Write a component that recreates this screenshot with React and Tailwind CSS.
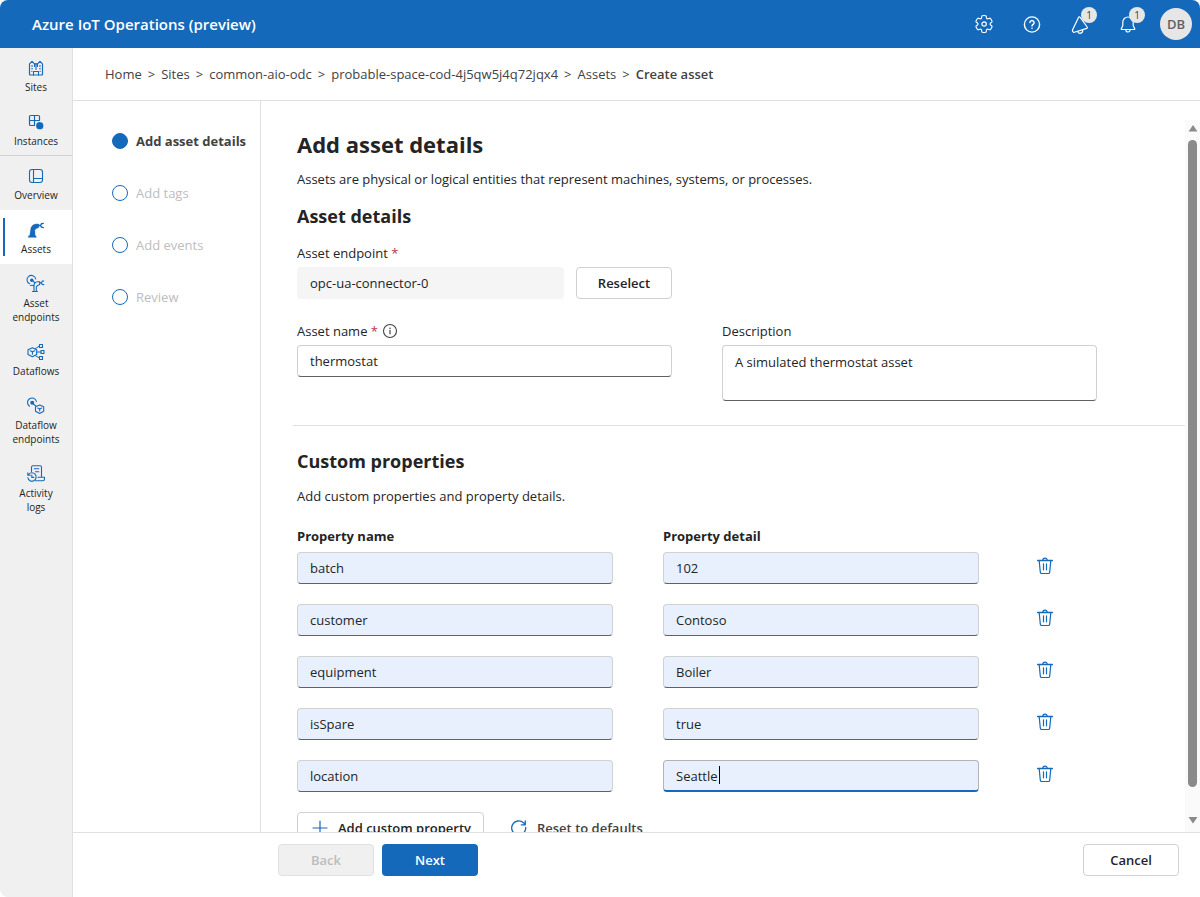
import React from "react";

const BLUE = "#1469bb";

function Icon({ size = 20, color = BLUE, children }) {
  return (
    <svg
      width={size}
      height={size}
      viewBox={`0 0 ${size} ${size}`}
      fill="none"
      stroke={color}
      strokeLinecap="round"
      strokeLinejoin="round"
      aria-hidden="true"
      className="shrink-0"
    >
      {children}
    </svg>
  );
}

const GearIcon = () => (
  <Icon color="#fff">
    <path
      strokeWidth="1.1"
      d="M1.91 7.38A8.5 8.5 0 0 1 3.7 4.3a.5.5 0 0 1 .54-.13l1.92.68a1 1 0 0 0 1.32-.76l.36-2a.5.5 0 0 1 .4-.4 8.53 8.53 0 0 1 3.55 0c.2.04.35.2.38.4l.37 2a1 1 0 0 0 1.32.76l1.92-.68a.5.5 0 0 1 .54.13 8.5 8.5 0 0 1 1.78 3.08c.06.2 0 .4-.15.54l-1.56 1.32a1 1 0 0 0 0 1.52l1.56 1.32a.5.5 0 0 1 .15.54 8.5 8.5 0 0 1-1.78 3.08.5.5 0 0 1-.54.13l-1.92-.68a1 1 0 0 0-1.32.76l-.37 2a.5.5 0 0 1-.38.4 8.53 8.53 0 0 1-3.56 0 .5.5 0 0 1-.39-.4l-.36-2a1 1 0 0 0-1.32-.76l-1.92.68a.5.5 0 0 1-.54-.13 8.5 8.5 0 0 1-1.78-3.08.5.5 0 0 1 .15-.54l1.56-1.32a1 1 0 0 0 0-1.52L2.06 7.92a.5.5 0 0 1-.15-.54Z"
    />
    <circle cx="10.1" cy="10" r="2.2" strokeWidth="1.2" />
  </Icon>
);

const HelpIcon = () => (
  <Icon color="#fff">
    <circle cx="10" cy="10.5" r="7.6" strokeWidth="1.4" />
    <path strokeWidth="1.4" d="M7.9 8.6a2.1 2.1 0 1 1 3.2 1.8c-.7.5-1.1.9-1.1 1.7" />
    <circle cx="10" cy="14.2" r=".8" fill="#fff" stroke="none" />
  </Icon>
);

const MegaphoneIcon = () => (
  <Icon color="#fff">
    <path strokeWidth="1.2" d="M10 3.2 17.2 13a.9.9 0 0 1-.4 1.4L4.4 18.3a1.2 1.2 0 0 1-1.3-.4l-.4-.6a1.400 1.400 0 0 1-.2-1.200L8.500 3.500a.9.9 0 0 1 1.500-.3Z" />
    <path strokeWidth="1.2" d="M7.600 17.400a2.600 2.600 0 0 0 5-1.500" />
  </Icon>
);

const BellIcon = () => (
  <Icon color="#fff">
    <path strokeWidth="1.2" d="M10 3a5.200 5.200 0 0 0-5.200 5.200v3.300l-1.500 3.300a.5.5 0 0 0 .5.7h12.400a.5.5 0 0 0 .5-.7l-1.500-3.300V8.200A5.200 5.200 0 0 0 10 3Z" />
    <path strokeWidth="1.200" d="M7.800 15.800a2.200 2.200 0 0 0 4.400 0" />
  </Icon>
);

const SitesIcon = () => (
  <Icon>
    <path strokeWidth="1.200" d="M3.500 16.300V5.800L6 3.300l2.500 2.500h3L14 3.300l2.500 2.500v10.500a.7.7 0 0 1-.7.700H4.200a.7.7 0 0 1-.7-.7Z" />
    <path strokeWidth="1.100" d="M8.500 5.800v2.700M11.500 5.800v2.700M10 6v5.500M7.500 17v-3.500h5V17" />
    <path strokeWidth="1.300" strokeLinecap="butt" d="M5.400 8h1.300M5.400 10.700h1.300M13.300 8h1.300M13.300 10.700h1.300M5.400 13.400h1M13.600 13.400h1" />
  </Icon>
);

const InstancesIcon = () => (
  <Icon>
    <path strokeWidth="1.2" d="M8 13.500H4.600a1.100 1.100 0 0 1-1.100-1.100V4.600a1.100 1.100 0 0 1 1.100-1.100h7.800a1.100 1.100 0 0 1 1.100 1.100V8.500H3.500M8.500 3.500v10" />
    <rect x="10.500" y="10.500" width="6.500" height="6.500" rx="2.500" fill={BLUE} strokeWidth=".6" />
  </Icon>
);

const OverviewIcon = () => (
  <Icon>
    <rect x="3.500" y="3.500" width="13" height="13" rx="2.500" strokeWidth="1.100" />
    <path strokeWidth="1.100" d="M7.500 3.500v13M7.500 12.500h9" />
  </Icon>
);

const AssetsIcon = () => (
  <Icon>
    <path
      fill={BLUE}
      strokeWidth=".4"
      d="M2.500 17.200v-1.400h1.300L4.600 9.800C4.800 6.400 7 4.300 10 4h2.800v3.600l-3 1.200-1 1.500.3 5.500h1v1.400Z"
    />
    <path strokeWidth="1.400" d="M12.800 5.500h1.700l1-1.800 1.800-.3M14.500 5.600l1 1.500 1.800.5" />
  </Icon>
);

const AssetEndpointsIcon = () => (
  <Icon>
    <path strokeWidth="1.100" d="M3.500 9.800A4.400 4.400 0 1 1 9.700 5" />
    <circle cx="5.800" cy="6.300" r="1.800" fill={BLUE} stroke="none" />
    <path strokeWidth="1.100" d="M7.300 7.400 9 9M6.500 17.500h5M8 17.300V12c0-2.600 1.200-4 3.700-4.200h2v2.700l-2 .9-1.400 1.400v4.500M8 12c-.8-.8-2-1-3.500-.5" />
    <path strokeWidth="1.200" d="M13.800 8.800h1.500l1-1.600 1.400-.2M15.300 9l1 1.300 1.400.4" />
  </Icon>
);

const DataflowsIcon = () => (
  <Icon>
    <path strokeWidth="1.100" d="m6.400 5.800 4.300 2v4.700l-4.300 2.200L2 12.500V7.800l4.400-2ZM4.300 8.800l2.100 1 2.300-1M6.400 9.800v2.400" />
    <rect x="13.500" y="2.500" width="3" height="3" strokeWidth="1.100" />
    <rect x="15" y="8.500" width="3" height="3" strokeWidth="1.100" />
    <rect x="13.500" y="14.500" width="3" height="3" strokeWidth="1.100" />
    <path strokeWidth="1" d="M9.500 6.500 13.500 4M10.700 10H15M9.500 13.700l4 2.300" />
  </Icon>
);

const DataflowEndpointsIcon = () => (
  <Icon>
    <path strokeWidth="1.100" d="M3.500 10.200A4.500 4.500 0 1 1 10.400 5.500" />
    <circle cx="6.200" cy="6.700" r="2" fill={BLUE} stroke="none" />
    <path strokeWidth="1.100" d="m7.500 8 2.700 2.300M13.700 9l4 1.700v4.600l-4 2.200-4.200-2.200v-4.600l4.200-1.700ZM11.800 12l1.900.9 2-.9M13.700 12.900v2" />
  </Icon>
);

const ActivityIcon = () => (
  <Icon>
    <path strokeWidth="1.100" d="M5.500 7.500V3.300c0-.9.600-1.500 1.400-1.500h7.300c.8 0 1.300.6 1.300 1.400v9.800M9.500 16.800h7.200c1.200 0 1.800-.7 1.800-1.800v-1.800h-6.500" />
    <path strokeWidth="1.100" d="M8.300 4.800h4.500M9.500 7.700h3.300" />
    <path strokeWidth="1.100" d="M2.400 10.700a4.200 4.200 0 1 1-.6 3M1.800 8.800v2.500h2.400M5.800 11v2.400h2" />
  </Icon>
);

const TrashIcon = () => (
  <Icon>
    <path strokeWidth="1.300" d="M2.600 4.500h14.800" />
    <path strokeWidth="1.200" d="M7.800 4.300a2.200 2.200 0 0 1 4.400 0M4.200 4.700l1.100 11.400c.1.900.7 1.400 1.500 1.400h6.400c.8 0 1.400-.5 1.500-1.400l1.100-11.400M8.500 7.800v6M11.500 7.800v6" />
  </Icon>
);

const InfoIcon = () => (
  <Icon size={16} color="#424242">
    <circle cx="8" cy="8" r="6.500" strokeWidth="1.100" />
    <path strokeWidth="1.200" d="M8 7.400v3.400" />
    <circle cx="8" cy="5.300" r=".8" fill="#424242" stroke="none" />
  </Icon>
);

const PlusIcon = () => (
  <Icon>
    <path strokeWidth="1.200" d="M10 3v14M3 10h14" />
  </Icon>
);

const ResetIcon = () => (
  <Icon>
    <path strokeWidth="1.300" d="M16.700 9.500a7 7 0 1 1-2.200-4.700l1.800 1.700M16.300 2.800v4h-4" />
  </Icon>
);

const NAV = [
  { label: "Sites", Glyph: SitesIcon },
  { label: "Instances", Glyph: InstancesIcon, divider: true },
  { label: "Overview", Glyph: OverviewIcon },
  { label: "Assets", Glyph: AssetsIcon, active: true },
  { label: "Asset endpoints", Glyph: AssetEndpointsIcon },
  { label: "Dataflows", Glyph: DataflowsIcon },
  { label: "Dataflow endpoints", Glyph: DataflowEndpointsIcon },
  { label: "Activity logs", Glyph: ActivityIcon },
];

const CRUMBS = ["Home", "Sites", "common-aio-odc", "probable-space-cod-4j5qw5j4q72jqx4", "Assets"];
const STEPS = ["Add asset details", "Add tags", "Add events", "Review"];
const PROPERTIES = [
  ["batch", "102"],
  ["customer", "Contoso"],
  ["equipment", "Boiler"],
  ["isSpare", "true"],
  ["location", "Seattle"],
];

const FIELD = "w-full min-w-0 rounded border px-3 text-[#242424] outline-none";
const RESTING = "border-[#d1d1d1] border-b-[#616161]";
const FOCUSED = "border-[#b3b3b3] border-b-2 border-b-[#1469bb]";
const OUTLINE_BUTTON =
  "h-8 shrink-0 rounded border border-[#d1d1d1] bg-white font-semibold text-[#242424]";

function HeaderButton({ label, badge, children }) {
  return (
    <button aria-label={label} className="relative flex h-12 w-12 items-center justify-center">
      {children}
      {badge && (
        <span className="absolute top-[7px] right-[7px] flex size-4 items-center justify-center rounded-full bg-[#e6e6e6] text-[10px] text-[#424242]">
          {badge}
        </span>
      )}
    </button>
  );
}

function Header() {
  return (
    <header className="flex h-12 shrink-0 items-center justify-between bg-[#1469bb] pr-2 pl-8 text-white">
      <span className="text-[15px] font-semibold">Azure IoT Operations (preview)</span>
      <div className="flex items-center">
        <HeaderButton label="Settings"><GearIcon /></HeaderButton>
        <HeaderButton label="Help"><HelpIcon /></HeaderButton>
        <HeaderButton label="Announcements" badge="1"><MegaphoneIcon /></HeaderButton>
        <HeaderButton label="Notifications" badge="1"><BellIcon /></HeaderButton>
        <button className="ml-2 size-8 rounded-full bg-[#e6e6e6] text-[13px] font-semibold text-[#616161]">DB</button>
      </div>
    </header>
  );
}

function Sidebar() {
  return (
    <nav className="w-[73px] shrink-0 border-r border-[#e0e0e0] bg-[#f0f0f0]">
      {NAV.map(({ label, Glyph, active, divider }) => (
        <a
          key={label}
          href="#"
          className={`relative flex flex-col items-center gap-0.5 px-3 pt-2.5 text-center text-[10px] leading-[14px] text-[#242424] ${
            active ? "bg-white" : ""
          } ${divider ? "border-b border-[#d1d1d1] pb-[7px]" : "pb-2"}`}
        >
          {active && <span className="absolute inset-y-2 left-[3px] w-0.5 bg-[#1469bb]" />}
          <Glyph />
          {label}
        </a>
      ))}
    </nav>
  );
}

function Breadcrumb() {
  return (
    <nav aria-label="Breadcrumb" className="h-[53px] shrink-0 border-b border-[#e0e0e0] px-8 text-[#424242]">
      <ol className="flex h-full items-center gap-1.5 whitespace-nowrap">
        {CRUMBS.map((c) => (
          <li key={c} className="flex gap-1.5">
            <a href="#">{c}</a>
            <span>&gt;</span>
          </li>
        ))}
        <li className="font-semibold">Create asset</li>
      </ol>
    </nav>
  );
}

function Steps() {
  return (
    <ol className="flex w-[188px] shrink-0 flex-col gap-8 border-r border-[#e0e0e0] pt-[30px] pl-[39px]">
      {STEPS.map((s, i) => (
        <li
          key={s}
          className={`flex items-center gap-2 leading-5 whitespace-nowrap ${
            i === 0 ? "font-bold text-[#424242]" : "text-[#bdbdbd]"
          }`}
        >
          <span className={`size-4 rounded-full border border-[#1469bb] ${i === 0 ? "bg-[#1469bb]" : ""}`} />
          {s}
        </li>
      ))}
    </ol>
  );
}

function Scrollbar() {
  return (
    <div aria-hidden="true" className="mt-[19px] flex w-[15px] shrink-0 flex-col items-center bg-[#fafafa] py-1">
      <svg width="10" height="8" viewBox="0 0 10 8" fill="#8a8a8a">
        <path d="M5 1 9.500 7.500h-9Z" />
      </svg>
      <span className="mt-2 mb-[29px] w-[9px] flex-1 rounded-full bg-[#8a8a8a]" />
      <svg width="10" height="8" viewBox="0 0 10 8" fill="#8a8a8a" className="mb-1">
        <path d="M5 7.500.5 1h9Z" />
      </svg>
    </div>
  );
}

function AssetForm() {
  return (
    <main className="min-w-0 flex-1 overflow-y-auto pt-[27px] [scrollbar-width:none]">
      <section className="ml-9 max-w-[800px]">
        <h1 className="text-[22px] leading-8 font-bold">Add asset details</h1>
        <p className="mt-[9px]">
          Assets are physical or logical entities that represent machines, systems, or processes.
        </p>
        <h2 className="mt-[13px] text-lg leading-7 font-bold">Asset details</h2>

        <div className="mt-[13px]">
          <label htmlFor="endpoint">
            Asset endpoint <span className="text-[#c4314b]">*</span>
          </label>
          <div className="mt-1 flex w-[375px] gap-3">
            <input
              id="endpoint"
              readOnly
              defaultValue="opc-ua-connector-0"
              className="h-8 min-w-0 flex-1 rounded bg-[#f5f5f5] px-[13px] text-[#242424] outline-none"
            />
            <button className={`${OUTLINE_BUTTON} w-24`}>Reselect</button>
          </div>
        </div>

        <div className="mt-[22px] grid grid-cols-2 gap-[50px]">
          <div>
            <div className="flex items-center gap-1">
              <label htmlFor="name">
                Asset name <span className="text-[#c4314b]">*</span>
              </label>
              <InfoIcon />
            </div>
            <input id="name" defaultValue="thermostat" className={`${FIELD} ${RESTING} mt-1 h-8`} />
          </div>
          <div>
            <label htmlFor="description" className="block">Description</label>
            <textarea
              id="description"
              defaultValue="A simulated thermostat asset"
              className={`${FIELD} ${RESTING} mt-1 block h-14 resize-none py-1.5`}
            />
          </div>
        </div>
      </section>

      <hr className="mt-6 ml-8 border-[#e0e0e0]" />

      <section className="mt-[21px] ml-9 max-w-[800px]">
        <h2 className="text-lg leading-7 font-bold">Custom properties</h2>
        <p className="mt-[11px]">Add custom properties and property details.</p>
        <div className="mt-5 grid grid-cols-[1fr_1fr_68px] gap-x-[50px] gap-y-5">
          {PROPERTIES.map(([name, detail], i) => {
            const focused = i === PROPERTIES.length - 1;
            return (
              <React.Fragment key={name}>
                <div>
                  {i === 0 && <div className="mb-1.5 font-bold">Property name</div>}
                  <input
                    aria-label="Property name"
                    defaultValue={name}
                    className={`${FIELD} ${RESTING} block h-8 bg-[#e8f0fe]`}
                  />
                </div>
                <div className="relative">
                  {i === 0 && <div className="mb-1.5 font-bold">Property detail</div>}
                  <input
                    aria-label="Property detail"
                    defaultValue={detail}
                    className={`${FIELD} ${focused ? FOCUSED : RESTING} block h-8 bg-[#e8f0fe]`}
                  />
                  {focused && <span className="absolute top-1.5 left-[56px] h-[18px] w-px bg-black" />}
                </div>
                <button aria-label={`Delete ${name}`} className="flex size-8 items-center justify-center self-end pb-1">
                  <TrashIcon />
                </button>
              </React.Fragment>
            );
          })}
        </div>
        <div className="mt-5 flex gap-[13px] pb-14">
          <button className={`${OUTLINE_BUTTON} flex items-center gap-2 px-3`}>
            <PlusIcon />
            Add custom property
          </button>
          <button className="flex h-8 items-center gap-2 px-3 font-semibold text-[#424242]">
            <ResetIcon />
            Reset to defaults
          </button>
        </div>
      </section>
    </main>
  );
}

function Footer() {
  return (
    <footer className="flex h-[65px] shrink-0 items-start gap-2 border-t border-[#e0e0e0] pt-[11px] pr-[21px] pl-[205px]">
      <button disabled className="h-8 w-24 rounded border border-[#e0e0e0] bg-[#f0f0f0] font-semibold text-[#bdbdbd]">
        Back
      </button>
      <button className="h-8 w-24 rounded bg-[#1469bb] font-semibold text-white">Next</button>
      <button className={`${OUTLINE_BUTTON} ml-auto w-24`}>Cancel</button>
    </footer>
  );
}

export default function App() {
  return (
    <div className="flex h-screen flex-col overflow-hidden rounded-lg bg-white font-['Open_Sans','Noto_Sans',sans-serif] text-[13px] leading-5 text-[#242424]">
      <Header />
      <div className="flex min-h-0 flex-1">
        <Sidebar />
        <div className="flex min-w-0 flex-1 flex-col">
          <Breadcrumb />
          <div className="flex min-h-0 flex-1">
            <Steps />
            <AssetForm />
            <Scrollbar />
          </div>
          <Footer />
        </div>
      </div>
    </div>
  );
}
